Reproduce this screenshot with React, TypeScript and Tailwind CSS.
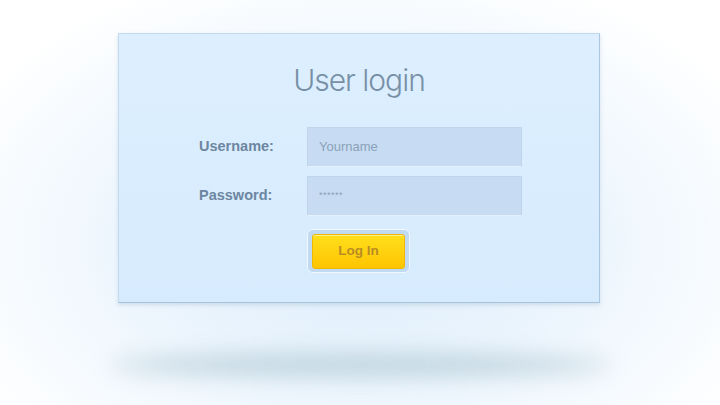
import React from "react";

export default function App() {
  return (
    <div
      className="relative w-[720px] h-[405px] overflow-hidden bg-white bg-[radial-gradient(ellipse_62%_72%_at_50%_60%,#ddecfa_0%,#eaf4fd_45%,#ffffff_100%)]"
      style={{ fontFamily: '"Liberation Sans", Arial, sans-serif' }}
    >
      <div className="absolute left-[110px] top-[354px] w-[500px] h-[22px] rounded-[50%] bg-[#b4cbd6] blur-[11px] opacity-80" />
      <div className="relative flex flex-col items-center pt-[33px] pr-[2px]">
        <div className="w-[482px] h-[270px] border border-[#c3daef] border-r-[#aac6e0] border-b-[#a5c2de] bg-gradient-to-b from-[#ddefff] to-[#d6ebfd] shadow-[0_2px_4px_rgba(120,150,180,0.25)] flex flex-col">
          <h1
            className="mt-[28px] text-center text-[30px] leading-[36px] tracking-[-1px] text-[#7890a6]"
            style={{ fontFamily: 'Inter, "Liberation Sans", sans-serif', fontWeight: 300 }}
          >
            User login
          </h1>
          <div className="mt-[29px] pl-[80px] flex flex-col gap-[9px]">
            <div className="flex items-center">
              <label className="w-[108px] text-[14.5px] font-bold text-[#6c86a1]">Username:</label>
              <div className="w-[215px] h-[40px] bg-[#c7dcf2] border border-[#bfd5ec] border-b-[#e4f1fd] flex items-center pl-[11px] text-[13px] text-[#8aa1b8]">
                Yourname
              </div>
            </div>
            <div className="flex items-center">
              <label className="w-[108px] text-[14.5px] font-bold text-[#6c86a1]">Password:</label>
              <div className="w-[215px] h-[40px] bg-[#c7dcf2] border border-[#bfd5ec] border-b-[#e4f1fd] flex items-center pl-[11px] text-[9px] tracking-[0.5px] text-[#8aa1b8]">
                ******
              </div>
            </div>
            <div className="ml-[108px] mt-[4px] w-[103px] h-[44px] rounded-[6px] bg-[#c0daf2] border border-[#f1f8ff] flex items-center justify-center">
              <button className="w-[93px] h-[35px] rounded-[3px] bg-gradient-to-b from-[#ffdf1a] to-[#ffc400] border border-[#f2b800] text-[13.5px] font-bold text-[#b98c23] shadow-[inset_0_1px_0_rgba(255,255,255,0.5)]">
                Log In
              </button>
            </div>
          </div>
        </div>
      </div>
    </div>
  );
}
